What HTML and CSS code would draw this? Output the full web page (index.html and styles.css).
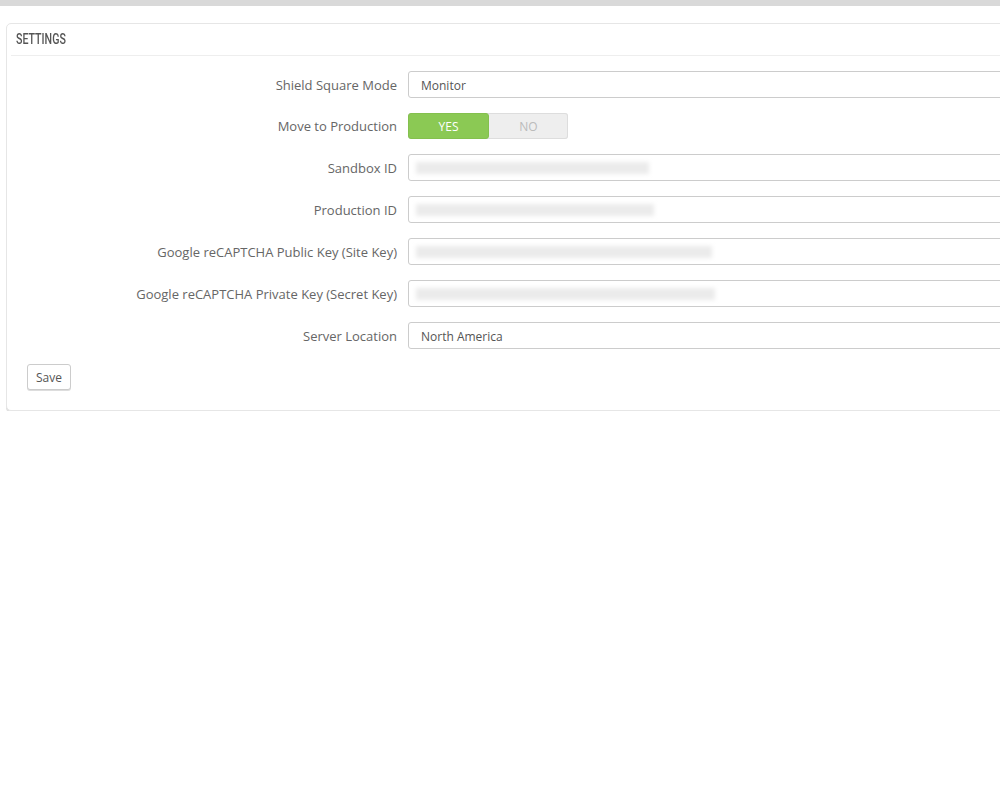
FILE: index.html
```html
<!DOCTYPE html>
<html lang="en">
<head>
    <meta charset="UTF-8">
    <meta name="viewport" content="width=device-width, initial-scale=1.0">
    <title>Settings</title>
    <link rel="stylesheet" href="styles.css">
</head>
<body>
    <div class="topbar"></div>

    <div class="content">
        <div class="panel">
            <div class="panel-heading"><span class="panel-title">Settings</span></div>

            <div class="form-group">
                <label class="control-label">Shield Square Mode</label>
                <div class="form-control">Monitor</div>
            </div>

            <div class="form-group">
                <label class="control-label">Move to Production</label>
                <div class="switch">
                    <span class="switch-yes">Yes</span>
                    <span class="switch-no">No</span>
                </div>
            </div>

            <div class="form-group">
                <label class="control-label">Sandbox ID</label>
                <div class="form-control"><span class="hidden-value" style="width: 233px"></span></div>
            </div>

            <div class="form-group">
                <label class="control-label">Production ID</label>
                <div class="form-control"><span class="hidden-value" style="width: 238px"></span></div>
            </div>

            <div class="form-group">
                <label class="control-label">Google reCAPTCHA Public Key (Site Key)</label>
                <div class="form-control"><span class="hidden-value" style="width: 296px"></span></div>
            </div>

            <div class="form-group">
                <label class="control-label">Google reCAPTCHA Private Key (Secret Key)</label>
                <div class="form-control"><span class="hidden-value" style="width: 299px"></span></div>
            </div>

            <div class="form-group">
                <label class="control-label">Server Location</label>
                <div class="form-control">North America</div>
            </div>

            <div class="panel-footer">
                <button class="btn">Save</button>
            </div>
        </div>
    </div>
</body>
</html>
```

FILE: styles.css
```css
body {
    font-family: 'Open Sans', sans-serif;
    font-size: 12px;
    color: #555;
    background-color: #fff;
    margin: 0;
    padding: 0;
    overflow-x: hidden;
}

.topbar {
    height: 6px;
    background-color: #d9d9d9;
}

.content {
    padding: 17px 0 0 6px;
}

.panel {
    width: 1200px;
    padding: 0 20px 20px 20px;
    border: 1px solid #e6e6e6;
    border-radius: 5px;
    background-color: #fff;
    box-shadow: 0 2px 0 rgba(0, 0, 0, 0.12);
}

.panel-heading {
    margin: 0 -16px 15px -16px;
    padding-left: 5px;
    height: 31px;
    line-height: 31px;
    border-bottom: 1px solid #eee;
    color: #555;
}

.panel-title {
    display: inline-block;
    font-family: 'Roboto', sans-serif;
    font-size: 14px;
    font-weight: 500;
    text-transform: uppercase;
    transform: scaleX(0.76);
    transform-origin: left center;
}

.form-group {
    display: flex;
    align-items: center;
    margin-bottom: 15px;
}

.control-label {
    width: 370px;
    padding-right: 11px;
    text-align: right;
    font-size: 13px;
    color: #666;
}

.form-control {
    flex: 1;
    box-sizing: border-box;
    height: 27px;
    padding: 1px 12px 0 12px;
    display: flex;
    align-items: center;
    border: 1px solid #ccc;
    border-radius: 3px;
    color: #555;
    font-size: 12px;
}

.hidden-value {
    display: block;
    height: 12px;
    margin-left: -5px;
    background-color: #ebebeb;
    filter: blur(2px);
}

.switch {
    display: flex;
    width: 160px;
    height: 26px;
    border-radius: 3px;
    background-color: #eee;
    box-shadow: inset 0 0 0 1px #ddd;
    text-transform: uppercase;
    font-size: 12px;
}

.switch-yes, .switch-no {
    flex: 1;
    display: flex;
    align-items: center;
    justify-content: center;
}

.switch-yes {
    background-color: #8bc954;
    border: 1px solid #84c04e;
    border-radius: 3px;
    color: #fff;
}

.switch-no {
    color: #bbb;
}

.btn {
    height: 26px;
    padding: 0 8px;
    font-family: 'Open Sans', sans-serif;
    font-size: 12px;
    color: #555;
    background-color: #fff;
    border: 1px solid #ccc;
    border-radius: 3px;
    box-shadow: 0 1px 0 #ddd;
    cursor: pointer;
}
```
